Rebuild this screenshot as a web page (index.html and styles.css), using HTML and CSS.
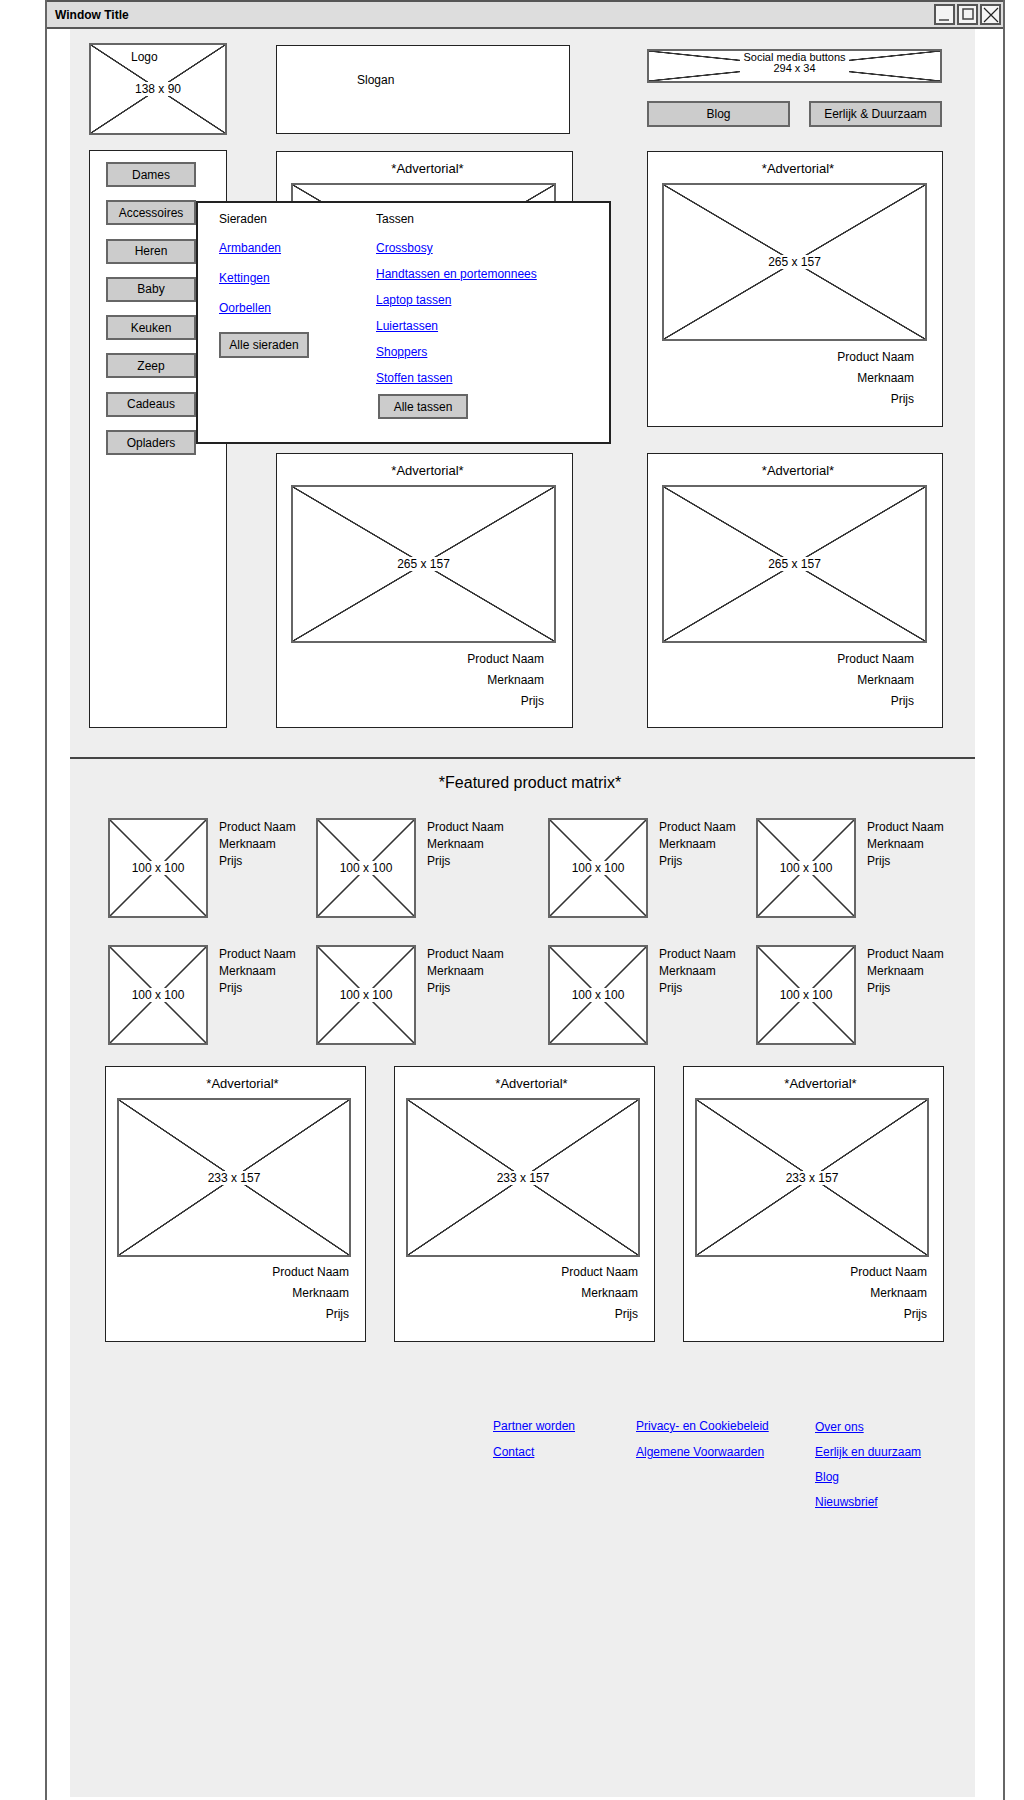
FILE: index.html
```html
<!DOCTYPE html>
<html lang="nl">
<head>
<meta charset="utf-8">
<title>Wireframe</title>
<link rel="stylesheet" href="styles.css">
</head>
<body>
<div class="window">
  <div class="titlebar">
    <span class="wtitle">Window Title</span>
    <div class="wbtns">
      <span class="wbtn"><svg width="17" height="17" viewBox="0 0 17 17"><path d="M3 14H13" stroke="#444" stroke-width="1.5" fill="none"/></svg></span>
      <span class="wbtn"><svg width="17" height="17" viewBox="0 0 17 17"><rect x="4" y="3" width="10" height="10" stroke="#444" stroke-width="1.5" fill="none"/></svg></span>
      <span class="wbtn"><svg width="17" height="17" viewBox="0 0 17 17"><path d="M2 2L16 16M16 2L2 16" stroke="#222" stroke-width="1.2" fill="none"/></svg></span>
    </div>
  </div>

  <div class="panel">
    <div class="upper">
      <div class="header">
        <div class="ph logo">
          <span class="logo-label">Logo</span>
          <span class="dim">138 x 90</span>
        </div>
        <div class="slogan">Slogan</div>
        <div class="social-col">
          <div class="ph social"><span class="dim">Social media buttons<br>294 x 34</span></div>
          <div class="hbtns">
            <span class="btn blog">Blog</span>
            <span class="btn eerlijk">Eerlijk &amp; Duurzaam</span>
          </div>
        </div>
      </div>

      <div class="main">
        <div class="sidebar">
          <span class="btn sbtn">Dames</span>
          <span class="btn sbtn">Accessoires</span>
          <span class="btn sbtn">Heren</span>
          <span class="btn sbtn">Baby</span>
          <span class="btn sbtn">Keuken</span>
          <span class="btn sbtn">Zeep</span>
          <span class="btn sbtn">Cadeaus</span>
          <span class="btn sbtn">Opladers</span>

          <div class="menu">
            <div class="mcol mcol-a">
              <div class="mhead">Sieraden</div>
              <a href="#" class="link">Armbanden</a>
              <a href="#" class="link">Kettingen</a>
              <a href="#" class="link">Oorbellen</a>
              <span class="btn mbtn">Alle sieraden</span>
            </div>
            <div class="mcol mcol-b">
              <div class="mhead">Tassen</div>
              <a href="#" class="link">Crossbosy</a>
              <a href="#" class="link">Handtassen en portemonnees</a>
              <a href="#" class="link">Laptop tassen</a>
              <a href="#" class="link">Luiertassen</a>
              <a href="#" class="link">Shoppers</a>
              <a href="#" class="link">Stoffen tassen</a>
              <span class="btn mbtn mbtn-b">Alle tassen</span>
            </div>
          </div>
        </div>

        <div class="ad ad-big r1 c2">
          <div class="ad-title">*Advertorial*</div>
          <div class="ph ad-img"><span class="dim">265 x 157</span></div>
          <div class="ad-info"><div>Product Naam</div><div>Merknaam</div><div>Prijs</div></div>
        </div>
        <div class="ad ad-big r1 c3">
          <div class="ad-title">*Advertorial*</div>
          <div class="ph ad-img"><span class="dim">265 x 157</span></div>
          <div class="ad-info"><div>Product Naam</div><div>Merknaam</div><div>Prijs</div></div>
        </div>
        <div class="ad ad-big r2 c2">
          <div class="ad-title">*Advertorial*</div>
          <div class="ph ad-img"><span class="dim">265 x 157</span></div>
          <div class="ad-info"><div>Product Naam</div><div>Merknaam</div><div>Prijs</div></div>
        </div>
        <div class="ad ad-big r2 c3">
          <div class="ad-title">*Advertorial*</div>
          <div class="ph ad-img"><span class="dim">265 x 157</span></div>
          <div class="ad-info"><div>Product Naam</div><div>Merknaam</div><div>Prijs</div></div>
        </div>
      </div>
    </div>

    <div class="divider"></div>

    <div class="ftitle">*Featured product matrix*</div>

    <div class="matrix">
      <div class="mi"><div class="ph sq"><span class="dim">100 x 100</span></div><div class="mi-info"><div>Product Naam</div><div>Merknaam</div><div>Prijs</div></div></div>
      <div class="mi"><div class="ph sq"><span class="dim">100 x 100</span></div><div class="mi-info"><div>Product Naam</div><div>Merknaam</div><div>Prijs</div></div></div>
      <div class="mi"><div class="ph sq"><span class="dim">100 x 100</span></div><div class="mi-info"><div>Product Naam</div><div>Merknaam</div><div>Prijs</div></div></div>
      <div class="mi"><div class="ph sq"><span class="dim">100 x 100</span></div><div class="mi-info"><div>Product Naam</div><div>Merknaam</div><div>Prijs</div></div></div>
      <div class="mi"><div class="ph sq"><span class="dim">100 x 100</span></div><div class="mi-info"><div>Product Naam</div><div>Merknaam</div><div>Prijs</div></div></div>
      <div class="mi"><div class="ph sq"><span class="dim">100 x 100</span></div><div class="mi-info"><div>Product Naam</div><div>Merknaam</div><div>Prijs</div></div></div>
      <div class="mi"><div class="ph sq"><span class="dim">100 x 100</span></div><div class="mi-info"><div>Product Naam</div><div>Merknaam</div><div>Prijs</div></div></div>
      <div class="mi"><div class="ph sq"><span class="dim">100 x 100</span></div><div class="mi-info"><div>Product Naam</div><div>Merknaam</div><div>Prijs</div></div></div>
    </div>

    <div class="ads3">
      <div class="ad ad-sm">
        <div class="ad-title">*Advertorial*</div>
        <div class="ph ad-img"><span class="dim">233 x 157</span></div>
        <div class="ad-info"><div>Product Naam</div><div>Merknaam</div><div>Prijs</div></div>
      </div>
      <div class="ad ad-sm">
        <div class="ad-title">*Advertorial*</div>
        <div class="ph ad-img"><span class="dim">233 x 157</span></div>
        <div class="ad-info"><div>Product Naam</div><div>Merknaam</div><div>Prijs</div></div>
      </div>
      <div class="ad ad-sm">
        <div class="ad-title">*Advertorial*</div>
        <div class="ph ad-img"><span class="dim">233 x 157</span></div>
        <div class="ad-info"><div>Product Naam</div><div>Merknaam</div><div>Prijs</div></div>
      </div>
    </div>

    <div class="footer">
      <div class="fcol">
        <a href="#" class="link">Partner worden</a>
        <a href="#" class="link">Contact</a>
      </div>
      <div class="fcol">
        <a href="#" class="link">Privacy- en Cookiebeleid</a>
        <a href="#" class="link">Algemene Voorwaarden</a>
      </div>
      <div class="fcol fcol-c">
        <a href="#" class="link">Over ons</a>
        <a href="#" class="link">Eerlijk en duurzaam</a>
        <a href="#" class="link">Blog</a>
        <a href="#" class="link">Nieuwsbrief</a>
      </div>
    </div>
  </div>
</div>
</body>
</html>
```

FILE: styles.css
```css
* { box-sizing: border-box; }

html, body {
  margin: 0;
  padding: 0;
  background: #fff;
}

body {
  font-family: "Liberation Sans", Arial, sans-serif;
  font-size: 12px;
  color: #000;
}

.window {
  margin-left: 45px;
  width: 960px;
  height: 1800px;
  border-left: 2px solid #666;
  border-right: 2px solid #666;
  background: #fff;
}

.titlebar {
  height: 29px;
  background: #ddd;
  border-top: 2px solid #555;
  border-bottom: 2px solid #555;
  display: flex;
  align-items: center;
  justify-content: space-between;
  padding: 0 2px 0 8px;
}

.wtitle {
  font-weight: bold;
  font-size: 12px;
}

.wbtns {
  display: flex;
  gap: 2px;
}

.wbtn {
  width: 21px;
  height: 21px;
  border: 2px solid #555;
  background: #f4f4f4;
  display: block;
}

.wbtn svg { display: block; }

.panel {
  margin-left: 23px;
  width: 905px;
  height: 1768px;
  background: #eeeeee;
}

.upper {
  padding: 14px 0 0 19px;
}

/* placeholders */
.ph {
  position: relative;
  display: flex;
  align-items: center;
  justify-content: center;
  border: 2px solid #666;
  background-color: #fff;
  background-image:
    linear-gradient(to top right, transparent calc(50% - 1px), #333 calc(50% - 0.5px), #333 calc(50% + 0.5px), transparent calc(50% + 1px)),
    linear-gradient(to bottom right, transparent calc(50% - 1px), #333 calc(50% - 0.5px), #333 calc(50% + 0.5px), transparent calc(50% + 1px));
}

.dim {
  background: #fff;
  padding: 0 3px;
  line-height: 14px;
  text-align: center;
}

/* header */
.header {
  display: grid;
  grid-template-columns: 138px 49px 297px 74px 296px;
  align-items: start;
}

.logo {
  grid-column: 1;
  width: 138px;
  height: 92px;
}

.logo-label {
  position: absolute;
  left: 40px;
  top: 4px;
  line-height: 16px;
}

.slogan {
  grid-column: 3;
  width: 294px;
  height: 89px;
  margin-top: 2px;
  background: #fff;
  border: 1px solid #222;
  padding: 26px 0 0 80px;
  line-height: 16px;
}

.social-col {
  grid-column: 5;
  margin-top: 6px;
}

.social {
  width: 295px;
  height: 34px;
}

.social .dim {
  font-size: 11px;
  line-height: 11px;
  margin-bottom: 6px;
}

.hbtns {
  display: flex;
  gap: 19px;
  margin-top: 18px;
}

.btn {
  display: flex;
  align-items: center;
  justify-content: center;
  height: 26px;
  background: #cccccc;
  border: 2px solid #666;
  color: #000;
}

.blog { width: 143px; }
.eerlijk { width: 133px; }

/* main */
.main {
  display: grid;
  grid-template-columns: 138px 49px 297px 74px 296px;
  grid-template-rows: 277px 275px;
  row-gap: 26px;
  margin-top: 15px;
}

.sidebar {
  grid-column: 1;
  grid-row: 1 / 3;
  position: relative;
  background: #fff;
  border: 1px solid #222;
  padding: 11px 0 0 16px;
  display: flex;
  flex-direction: column;
  gap: 13.3px;
}

.sbtn {
  width: 90px;
  height: 25px;
  flex: none;
}

.menu {
  position: absolute;
  left: 106px;
  top: 50px;
  z-index: 2;
  width: 415px;
  height: 243px;
  background: #fff;
  border: 2px solid #222;
  padding: 8px 0 0 21px;
  display: grid;
  grid-template-columns: 157px auto;
}

.mcol {
  display: flex;
  flex-direction: column;
  align-items: flex-start;
  line-height: 16px;
}

.mcol-a { gap: 14px; }
.mcol-b { gap: 10px; }

.mhead { margin-bottom: -1px; }
.mcol-b .mhead { margin-bottom: 3px; }

.link {
  color: #0000ff;
  text-decoration: underline;
}

.mbtn {
  width: 90px;
  height: 26px;
  margin-top: 2px;
}

.mbtn-b {
  margin-top: -2px;
  margin-left: 2px;
  height: 25px;
}

.ad {
  background: #fff;
  border: 1px solid #222;
}

.ad-big {
  padding: 9px 28px 0 14px;
}

.r1 { grid-row: 1; margin-top: 1px; }
.r2 { grid-row: 2; }
.c2 { grid-column: 3; }
.c3 { grid-column: 5; }

.ad-title {
  font-size: 13px;
  line-height: 16px;
  text-align: center;
  padding-left: 6px;
}

.ad-big .ad-title { margin-right: -14px; }

.ad-img {
  margin-top: 6px;
}

.ad-big .ad-img {
  width: 265px;
  height: 158px;
}

.ad-info {
  margin-top: 6px;
  text-align: right;
  line-height: 21px;
}

/* featured */
.divider {
  height: 2px;
  background: #444;
  margin-top: 29px;
}

.ftitle {
  margin-top: 14px;
  font-size: 16px;
  line-height: 20px;
  text-align: center;
  padding-left: 15px;
}

.matrix {
  display: grid;
  grid-template-columns: 208px 232px 208px 208px;
  row-gap: 27px;
  padding-left: 38px;
  margin-top: 25px;
}

.mi {
  display: flex;
  align-items: flex-start;
}

.sq {
  width: 100px;
  height: 100px;
  flex: none;
}

.mi-info {
  margin-left: 11px;
  line-height: 17px;
  margin-top: 1px;
}

.ads3 {
  display: grid;
  grid-template-columns: repeat(3, 261px);
  column-gap: 28px;
  padding-left: 35px;
  margin-top: 21px;
}

.ad-sm {
  height: 276px;
  padding: 9px 16px 0 11px;
}

.ad-sm .ad-title {
  padding-left: 14px;
  margin-right: -5px;
}

.ad-sm .ad-img {
  width: 234px;
  height: 159px;
}

.ad-sm .ad-info { margin-top: 5px; }

/* footer */
.footer {
  display: grid;
  grid-template-columns: 143px 179px auto;
  padding-left: 423px;
  margin-top: 76px;
}

.fcol {
  display: flex;
  flex-direction: column;
  align-items: flex-start;
  gap: 10px;
  line-height: 16px;
}

.fcol-c {
  padding-top: 1px;
  gap: 9px;
}
```
